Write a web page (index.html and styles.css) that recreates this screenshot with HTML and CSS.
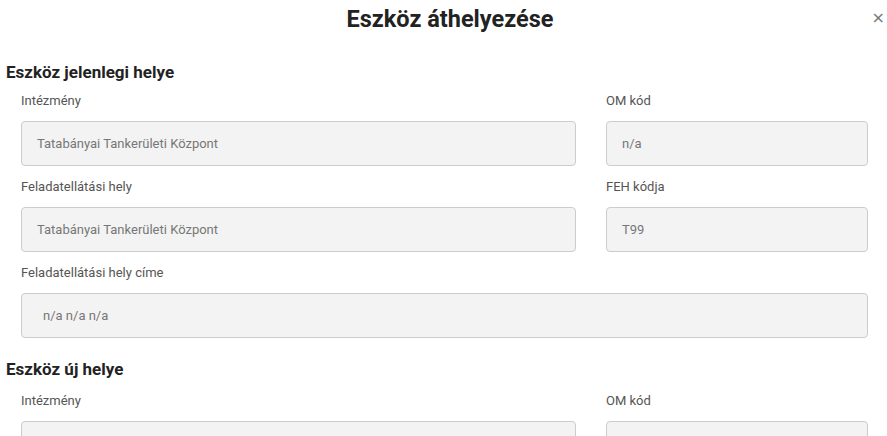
FILE: index.html
```html
<!DOCTYPE html>
<html lang="hu">
<head>
    <meta charset="UTF-8">
    <meta name="viewport" content="width=device-width, initial-scale=1.0">
    <title>Eszköz áthelyezése</title>
    <link rel="stylesheet" href="styles.css">
</head>
<body>
    <div class="modal">
        <div class="modal-header">
            <h1>Eszköz áthelyezése</h1>
            <button class="close" aria-label="Bezárás">&times;</button>
        </div>

        <h2>Eszköz jelenlegi helye</h2>
        <div class="row">
            <div class="field">
                <label>Intézmény</label>
                <div class="input">Tatabányai Tankerületi Központ</div>
            </div>
            <div class="field">
                <label>OM kód</label>
                <div class="input">n/a</div>
            </div>
        </div>
        <div class="row">
            <div class="field">
                <label>Feladatellátási hely</label>
                <div class="input">Tatabányai Tankerületi Központ</div>
            </div>
            <div class="field">
                <label>FEH kódja</label>
                <div class="input">T99</div>
            </div>
        </div>
        <div class="row single">
            <div class="field">
                <label>Feladatellátási hely címe</label>
                <div class="input address">n/a n/a n/a</div>
            </div>
        </div>

        <h2 class="second">Eszköz új helye</h2>
        <div class="row">
            <div class="field">
                <label>Intézmény</label>
                <div class="input">Tatabányai Tankerületi Központ</div>
            </div>
            <div class="field">
                <label>OM kód</label>
                <div class="input"></div>
            </div>
        </div>
    </div>
</body>
</html>
```

FILE: styles.css
```css
body {
    margin: 0;
    font-family: Roboto, "Liberation Sans", sans-serif;
    background: #fff;
    color: #222;
    overflow: hidden;
}
.modal {
    padding: 0 19px 0 6px;
}
.modal-header {
    position: relative;
    height: 38px;
    display: flex;
    align-items: center;
    justify-content: center;
    padding-left: 26px;
}
h1 {
    margin: 0;
    font-size: 23.5px;
    font-weight: 700;
    color: #222;
}
.close {
    position: absolute;
    right: -17px;
    top: 8px;
    background: none;
    border: none;
    font-family: "DejaVu Sans", sans-serif;
    font-size: 16px;
    color: #777;
    padding: 0;
    cursor: pointer;
}
h2 {
    margin: 22px 0 0;
    font-size: 17px;
    line-height: 24px;
    font-weight: 700;
    color: #222;
}
h2.second {
    margin-top: 19px;
}
.row {
    display: grid;
    grid-template-columns: 555px 262px;
    column-gap: 30px;
    margin-left: 15px;
}
.row.single { grid-template-columns: 847px; }
.row + .row { margin-top: 11px; }
h2 + .row { margin-top: 7px; }
h2.second + .row { margin-top: 10px; }
label {
    display: block;
    font-size: 13px;
    line-height: 20px;
    color: #555;
    margin-bottom: 10px;
}
.input {
    box-sizing: border-box;
    height: 45px;
    border: 1px solid #ccc;
    border-radius: 4px;
    background: #f3f3f3;
    padding: 0 15px;
    display: flex;
    align-items: center;
    font-size: 13px;
    color: #777;
}
.input.address { padding-left: 21px; }
```
